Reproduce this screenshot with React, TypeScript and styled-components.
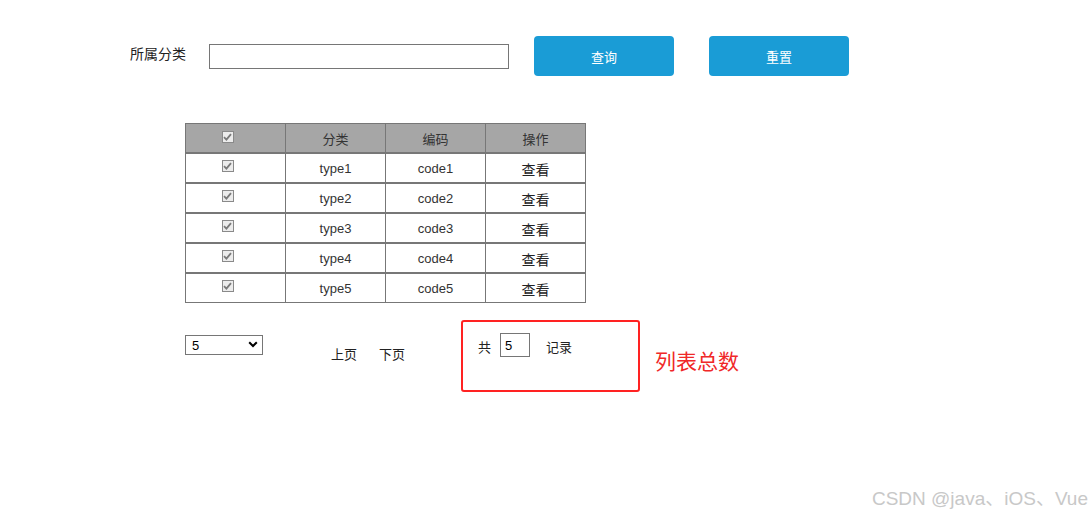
import React, { FC } from 'react';
import styled, { createGlobalStyle } from 'styled-components';

const GlobalStyle = createGlobalStyle`
  html, body {
    margin: 0;
    padding: 0;
    background: #fff;
  }
  body {
    font-family: "Liberation Sans", "Noto Sans CJK SC", sans-serif;
    color: #333;
  }
`

const Page = styled.div`
  position: relative;
  width: 1092px;
  height: 515px;
  overflow: hidden;
`
const SearchBar = styled.div`
  display: flex;
  align-items: center;
  padding: 36px 0 0 130px;
`
const Label = styled.span`
  font-family: "Noto Sans CJK SC", sans-serif;
  font-size: 14px;
  color: #222;
  margin: 0 23px 6px 0;
`
const TextInput = styled.input`
  box-sizing: border-box;
  width: 300px;
  height: 25px;
  border: 1px solid #767676;
  outline: none;
  padding: 0 4px;
`
const Button = styled.button<{ $gap: number }>`
  width: 140px;
  height: 40px;
  margin-left: ${p => p.$gap}px;
  border: none;
  border-radius: 4px;
  background: #1a9cd6;
  color: #fff;
  font-family: "Noto Sans CJK SC", sans-serif;
  font-size: 13px;
  padding-top: 2px;
  cursor: pointer;
`
const Table = styled.table`
  margin: 47px 0 0 185px;
  width: 401px;
  border-collapse: collapse;
  table-layout: fixed;
  th, td {
    border: 1px solid #777;
    height: 28px;
    padding: 0;
    text-align: center;
    vertical-align: middle;
  }
  tbody td {
    height: 26px;
    border-top: 2px solid #777;
  }
`
const HeadCell = styled.th`
  background: #a6a6a6;
  font-family: "Noto Sans CJK SC", sans-serif;
  font-weight: normal;
  font-size: 13px;
  color: #333;
`
const Cell = styled.td<{ $cjk?: boolean }>`
  font-family: ${p => p.$cjk ? `"Noto Sans CJK SC", sans-serif` : `"Liberation Sans", "Noto Sans CJK SC", sans-serif`};
  font-size: ${p => p.$cjk ? 14 : 13}px;
  color: ${p => p.$cjk ? '#222' : '#333'};
  padding-top: ${p => p.$cjk ? 2 : 0}px !important;
`
const Check = styled.span`
  display: inline-flex;
  align-items: center;
  justify-content: center;
  box-sizing: border-box;
  width: 12px;
  height: 12px;
  border: 1px solid #8a8a8a;
  background: #ececec;
  margin: 0 16px 5px 0;
  vertical-align: middle;
`
const Pager = styled.div`
  display: flex;
  align-items: flex-start;
  margin: 17px 0 0 185px;
`
const SelectWrap = styled.div`
  position: relative;
  margin-top: 15px;
  width: 78px;
  height: 20px;
`
const Select = styled.select`
  appearance: none;
  box-sizing: border-box;
  width: 78px;
  height: 20px;
  border: 1px solid #767676;
  border-radius: 0;
  background: #fff;
  padding: 0 0 0 6px;
  font-family: "Liberation Sans", sans-serif;
  font-size: 13px;
  color: #000;
`
const Chevron = styled.svg`
  position: absolute;
  right: 5px;
  top: 6px;
  pointer-events: none;
`
const PageLink = styled.span<{ $gap: number }>`
  margin: 24px 0 0 ${p => p.$gap}px;
  font-family: "Noto Sans CJK SC", sans-serif;
  font-size: 13px;
  color: #222;
  cursor: pointer;
`
const TotalBox = styled.div`
  display: flex;
  box-sizing: border-box;
  width: 179px;
  height: 72px;
  margin-left: 56px;
  padding: 11px 0 0 15px;
  align-items: flex-start;
  border: 2px solid #f22;
  border-radius: 3px;
`
const TotalText = styled.span<{ $gap: number }>`
  margin: 4px 0 0 ${p => p.$gap}px;
  font-family: "Noto Sans CJK SC", sans-serif;
  font-size: 13px;
  color: #222;
`
const TotalInput = styled.input`
  box-sizing: border-box;
  width: 30px;
  height: 24px;
  margin-left: 9px;
  border: 1px solid #767676;
  padding: 0 4px;
  font-family: "Liberation Sans", sans-serif;
  font-size: 13px;
  color: #000;
`
const Note = styled.span`
  margin: 25px 0 0 15px;
  font-family: "Noto Sans CJK SC", sans-serif;
  font-size: 21px;
  color: #f02828;
`
const Watermark = styled.div`
  position: absolute;
  right: 4px;
  bottom: 5px;
  font-family: "Liberation Sans", "Noto Sans CJK SC", sans-serif;
  font-size: 19px;
  color: #c8c8c8;
`

const rows = [1, 2, 3, 4, 5]

const CheckMark: FC = () => (
  <Check>
    <svg width="9" height="8" viewBox="0 0 9 8">
      <path d="M1 4.2 L3.4 6.6 L8 1.2" fill="none" stroke="#7a7a7a" strokeWidth="1.8" />
    </svg>
  </Check>
)

const App: FC = () => {
  return (
    <Page>
      <GlobalStyle />
      <SearchBar>
        <Label>所属分类</Label>
        <TextInput />
        <Button $gap={25}>查询</Button>
        <Button $gap={35}>重置</Button>
      </SearchBar>

      <Table>
        <thead>
          <tr>
            <HeadCell><CheckMark /></HeadCell>
            <HeadCell>分类</HeadCell>
            <HeadCell>编码</HeadCell>
            <HeadCell>操作</HeadCell>
          </tr>
        </thead>
        <tbody>
          {rows.map(n => (
            <tr key={n}>
              <Cell><CheckMark /></Cell>
              <Cell>type{n}</Cell>
              <Cell>code{n}</Cell>
              <Cell $cjk>查看</Cell>
            </tr>
          ))}
        </tbody>
      </Table>

      <Pager>
        <SelectWrap>
          <Select defaultValue="5">
            <option value="5">5</option>
            <option value="10">10</option>
            <option value="20">20</option>
          </Select>
          <Chevron width="10" height="7" viewBox="0 0 10 7">
            <path d="M1.2 1.2 L5 5 L8.8 1.2" fill="none" stroke="#000" strokeWidth="2" />
          </Chevron>
        </SelectWrap>
        <PageLink $gap={68}>上页</PageLink>
        <PageLink $gap={22}>下页</PageLink>
        <TotalBox>
          <TotalText $gap={0}>共</TotalText>
          <TotalInput defaultValue="5" />
          <TotalText $gap={16}>记录</TotalText>
        </TotalBox>
        <Note>列表总数</Note>
      </Pager>

      <Watermark>CSDN @java、iOS、Vue</Watermark>
    </Page>
  );
};

export default App;
